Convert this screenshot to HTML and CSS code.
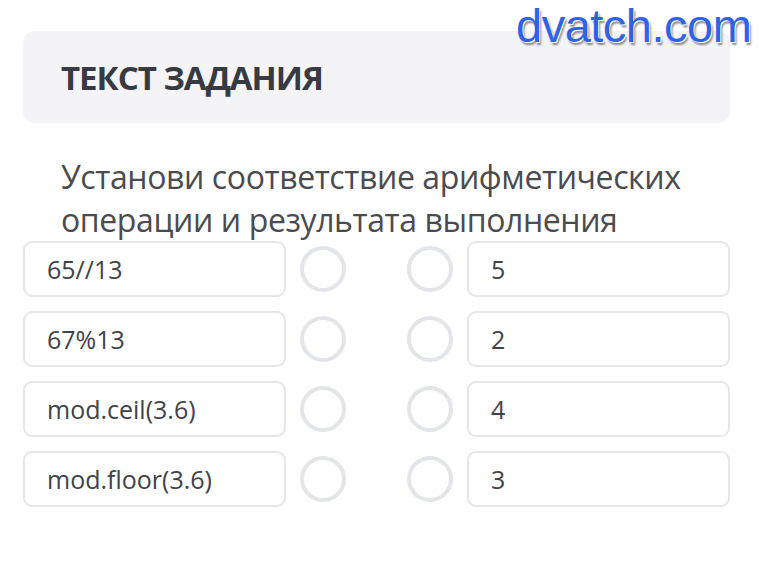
FILE: index.html
```html
<!DOCTYPE html>
<html lang="ru">
<head>
    <meta charset="UTF-8">
    <title>Текст задания</title>
    <link rel="stylesheet" href="styles.css">
</head>
<body>
    <div class="watermark">dvatch.com</div>

    <div class="page">
        <div class="task-head">
            <h1>ТЕКСТ ЗАДАНИЯ</h1>
        </div>

        <p class="question">Установи соответствие арифметических операции и результата выполнения</p>

        <div class="match">
            <div class="row">
                <div class="cell">65//13</div>
                <span class="dot"></span>
                <span class="dot"></span>
                <div class="cell">5</div>
            </div>
            <div class="row">
                <div class="cell">67%13</div>
                <span class="dot"></span>
                <span class="dot"></span>
                <div class="cell">2</div>
            </div>
            <div class="row">
                <div class="cell">mod.ceil(3.6)</div>
                <span class="dot"></span>
                <span class="dot"></span>
                <div class="cell">4</div>
            </div>
            <div class="row">
                <div class="cell">mod.floor(3.6)</div>
                <span class="dot"></span>
                <span class="dot"></span>
                <div class="cell">3</div>
            </div>
        </div>
    </div>
</body>
</html>
```

FILE: styles.css
```css
body {
    margin: 0;
    background: #ffffff;
    font-family: "Open Sans", "Noto Sans", sans-serif;
    color: #404348;
}
.page {
    padding: 31px 40px 0 23px;
}
.task-head {
    background: #f4f4f7;
    border-radius: 12px;
    height: 92px;
    display: flex;
    align-items: center;
    padding-left: 38px;
}
.task-head h1 {
    margin: 0;
    font-size: 33px;
    font-weight: 700;
    color: #373a40;
    letter-spacing: -1px;
}
.question {
    margin: 32px 0 0 38px;
    font-size: 32px;
    line-height: 43px;
    color: #4a4b4f;
    letter-spacing: -0.4px;
}
.match {
    margin-top: 0;
    display: flex;
    flex-direction: column;
    gap: 14px;
}
.row {
    display: flex;
    align-items: center;
}
.cell {
    width: 263px;
    height: 56px;
    box-sizing: border-box;
    border: 2px solid #e5e6e8;
    border-radius: 9px;
    display: flex;
    align-items: center;
    padding-left: 22px;
    font-size: 25px;
    color: #404348;
}
.dot {
    width: 46px;
    height: 46px;
    box-sizing: border-box;
    border: 4px solid #e3e5e8;
    border-radius: 50%;
}
.row .dot:nth-child(2) {
    margin-left: 14px;
}
.row .dot:nth-child(3) {
    margin-left: 61px;
    margin-right: 14px;
}
.watermark {
    position: absolute;
    top: 2px;
    left: 516px;
    font-family: "Liberation Sans", Arial, sans-serif;
    font-size: 47px;
    line-height: 1;
    color: #2f62e6;
    text-shadow: 1px 1px 0 #fff, 2px 3px 2px #888;
    letter-spacing: -0.5px;
}
```
